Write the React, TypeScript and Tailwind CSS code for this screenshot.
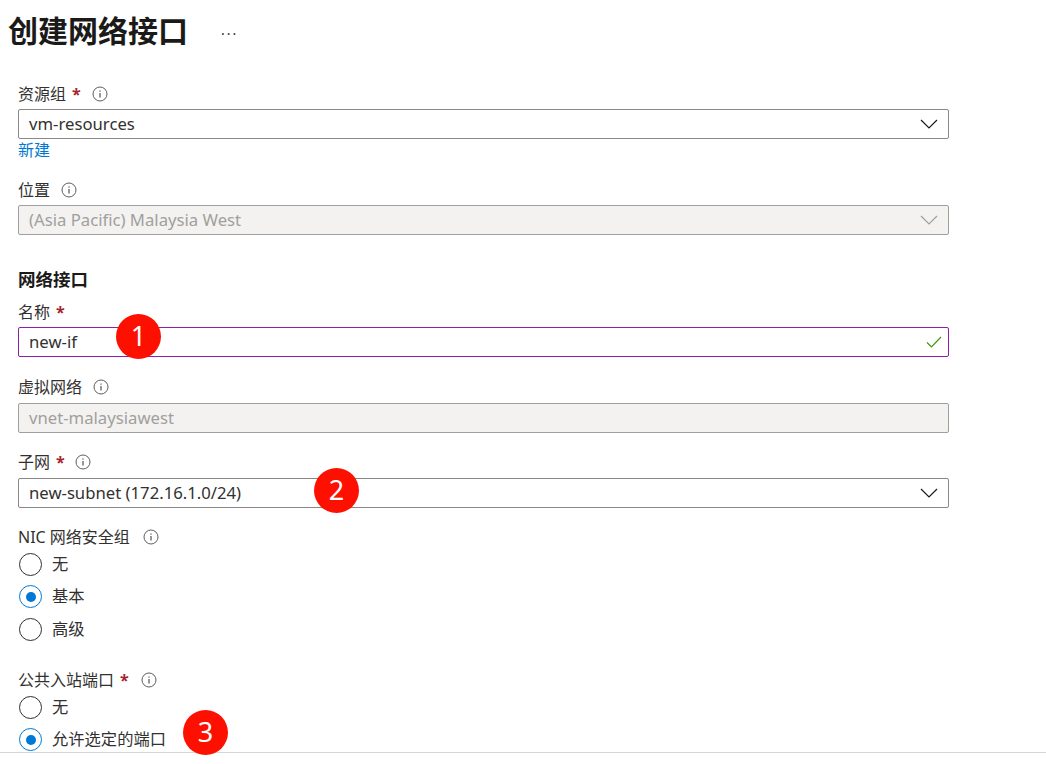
const font = 'font-["Noto_Sans","Noto_Sans_CJK_SC",sans-serif]'

const InfoIcon = () => (
  <svg width="16" height="16" viewBox="0 0 16 16" fill="none" className="shrink-0">
    <circle cx="8" cy="8" r="7" stroke="#605e5c" strokeWidth="1" />
    <rect x="7.5" y="7" width="1" height="4.5" fill="#323130" />
    <rect x="7.5" y="4.5" width="1" height="1.2" fill="#323130" />
  </svg>
)

const Chevron = ({ disabled }: { disabled?: boolean }) => (
  <svg width="18" height="10" viewBox="0 0 18 10" fill="none" className="shrink-0">
    <path d="M1 1l8 8 8-8" stroke={disabled ? '#a19f9d' : '#1b1a19'} strokeWidth="1.2" />
  </svg>
)

const Check = () => (
  <svg width="16" height="12" viewBox="0 0 16 12" fill="none" className="shrink-0">
    <path d="M1 6.5l4.5 4.5L15 1" stroke="#3f9a0e" strokeWidth="1.2" />
  </svg>
)

const Badge = ({ n, className }: { n: string; className: string }) => (
  <div className={`absolute z-10 w-[45px] h-[45px] rounded-full bg-[#fe1000] text-white text-[27px] flex items-center justify-center ${className}`}>
    {n}
  </div>
)

const Label = ({ text, required, info, className = '', gap = 'ml-[11px]' }: any) => (
  <div className={`flex items-center h-[22px] text-[16px] text-[#323130] ${className}`}>
    <span>{text}</span>
    {required && <span className="ml-1.5 text-[#a4262c] font-bold">*</span>}
    {info && <span className={gap}><InfoIcon /></span>}
  </div>
)

const Control = ({ value, disabled, select, valid, className = '' }: any) => (
  <div
    className={`flex items-center justify-between h-[30px] pl-[10px] rounded-[2px] border text-[16.7px] ${
      valid
        ? 'pr-[6px] border-[#8a1fa8] text-[#323130] bg-white'
        : disabled
          ? 'pr-[10px] border-[#a19f9d] bg-[#f3f2f1] text-[#a19f9d]'
          : 'pr-[10px] border-[#8a8886] text-[#323130] bg-white'
    } ${className}`}
  >
    <span>{value}</span>
    {select && <Chevron disabled={disabled} />}
    {valid && <Check />}
  </div>
)

const Radio = ({ text, checked, className = '' }: any) => (
  <div className={`flex items-center h-[23px] ${className}`}>
    <div className={`w-[23px] h-[23px] ml-[1px] rounded-full bg-white flex items-center justify-center border ${checked ? 'border-[#0078d4]' : 'border-[#323130]'}`}>
      {checked && <div className="w-[10px] h-[10px] rounded-full bg-[#0078d4]" />}
    </div>
    <span className="ml-[10px] text-[16.3px] text-[#323130]">{text}</span>
  </div>
)

export default function App() {
  return (
    <div className={`relative w-[1046px] h-[764px] overflow-hidden bg-white ${font}`}>
      <div className="h-[752px] pt-[12px]">
        <div className="flex items-center h-[38px] pl-[8px]">
          <h1 className="text-[30px] font-bold text-[#1b1a19] leading-none">创建网络接口</h1>
          <span className="ml-[33px] mt-[6px] text-[14px] leading-none tracking-[2px] text-[#323130]">···</span>
        </div>

        <div className="w-[931px] ml-[18px]">
          <Label text="资源组" required info className="mt-[33px]" />
          <Control value="vm-resources" select className="mt-[4px]" />
          <div className="h-[20px] mt-px text-[16px] leading-[20px] text-[#0078d4]">新建</div>

          <Label text="位置" info className="mt-[19px]" />
          <Control value="(Asia Pacific) Malaysia West" select disabled className="mt-[4px]" />

          <div className="h-[22px] mt-[33px] text-[17.5px] leading-[22px] font-bold text-[#1b1a19]">网络接口</div>

          <Label text="名称" required className="mt-[11px]" />
          <div className="relative mt-[4px]">
            <Control value="new-if" valid />
            <Badge n="1" className="left-[98px] top-[-13px]" />
          </div>

          <Label text="虚拟网络" info className="mt-[19px]" />
          <Control value="vnet-malaysiawest" disabled className="mt-[5px]" />

          <Label text="子网" required info className="mt-[18px]" gap="ml-2.5" />
          <div className="relative mt-[5px]">
            <Control value="new-subnet (172.16.1.0/24)" select />
            <Badge n="2" className="left-[296px] top-[-10px]" />
          </div>

          <Label text="NIC 网络安全组" info className="mt-[18px]" gap="ml-[13px]" />
          <Radio text="无" className="mt-[5px]" />
          <Radio text="基本" checked className="mt-[9px]" />
          <Radio text="高级" className="mt-[10px]" />

          <Label text="公共入站端口" required info className="mt-[28px]" gap="ml-3" />
          <Radio text="无" className="mt-[5px]" />
          <div className="relative mt-[9px]">
            <Radio text="允许选定的端口" checked />
            <Badge n="3" className="left-[165px] top-[-18px]" />
          </div>
        </div>
      </div>
      <div className="h-[12px] border-t border-[#d6d6d6]" />
    </div>
  )
}
